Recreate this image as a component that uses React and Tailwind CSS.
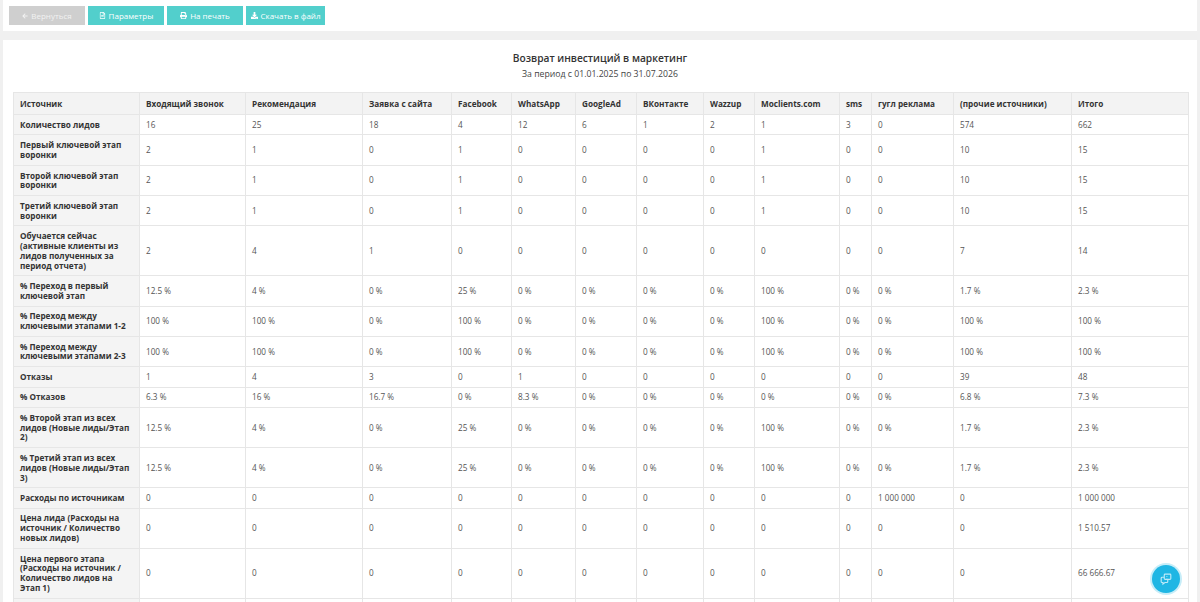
import React from 'react'
import { FaArrowLeft, FaRegFileAlt, FaPrint, FaDownload } from 'react-icons/fa'

const headers = [
  'Источник', 'Входящий звонок', 'Рекомендация', 'Заявка с сайта', 'Facebook', 'WhatsApp', 'GoogleAd',
  'ВКонтакте', 'Wazzup', 'Moclients.com', 'sms', 'гугл реклама', '(прочие источники)', 'Итого'
]

const widths = [
  'w-[126px]', 'w-[106px]', 'w-[117px]', 'w-[89px]', 'w-[60px]', 'w-[64px]', 'w-[61px]',
  'w-[67px]', 'w-[51px]', 'w-[85px]', 'w-[32px]', 'w-[82px]', 'w-[118px]', 'w-[117px]'
]

const stages = ['2', '1', '0', '1', '0', '0', '0', '0', '1', '0', '0', '10', '15']
const pctFirst = ['12.5 %', '4 %', '0 %', '25 %', '0 %', '0 %', '0 %', '0 %', '100 %', '0 %', '0 %', '1.7 %', '2.3 %']
const pctBetween = ['100 %', '100 %', '0 %', '100 %', '0 %', '0 %', '0 %', '0 %', '100 %', '0 %', '0 %', '100 %', '100 %']
const zeros = (last) => ['0', '0', '0', '0', '0', '0', '0', '0', '0', '0', '0', '0', last]

const rows = [
  ['Количество лидов', ['16', '25', '18', '4', '12', '6', '1', '2', '1', '3', '0', '574', '662']],
  ['Первый ключевой этап воронки', stages],
  ['Второй ключевой этап воронки', stages],
  ['Третий ключевой этап воронки', stages],
  ['Обучается сейчас (активные клиенты из лидов полученных за период отчета)', ['2', '4', '1', '0', '0', '0', '0', '0', '0', '0', '0', '7', '14']],
  ['% Переход в первый ключевой этап', pctFirst],
  ['% Переход между ключевыми этапами 1-2', pctBetween],
  ['% Переход между ключевыми этапами 2-3', pctBetween],
  ['Отказы', ['1', '4', '3', '0', '1', '0', '0', '0', '0', '0', '0', '39', '48']],
  ['% Отказов', ['6.3 %', '16 %', '16.7 %', '0 %', '8.3 %', '0 %', '0 %', '0 %', '0 %', '0 %', '0 %', '6.8 %', '7.3 %']],
  ['% Второй этап из всех лидов (Новые лиды/Этап 2)', pctFirst],
  ['% Третий этап из всех лидов (Новые лиды/Этап 3)', pctFirst],
  ['Расходы по источникам', ['0', '0', '0', '0', '0', '0', '0', '0', '0', '0', '1 000 000', '0', '1 000 000']],
  ['Цена лида (Расходы на источник / Количество новых лидов)', zeros('1 510.57')],
  ['Цена первого этапа (Расходы на источник / Количество лидов на Этап 1)', zeros('66 666.67')],
  ['Цена второго этапа (Расходы на источник / Количество лидов на Этап 2)', zeros('66 666.67')],
]

function Button({ icon, children, gray }) {
  return (
    <button
      className={`w-full h-[19px] flex items-center justify-center gap-[3px] text-[8px] ${gray ? 'bg-[#cfcfcf] text-[#f2f2f2]' : 'bg-[#52cfcc] text-white'}`}
    >
      {icon}
      <span>{children}</span>
    </button>
  )
}

export default function App() {
  return (
    <div className="min-h-screen bg-[#f0f0f0] px-[3px] font-['Open_Sans',sans-serif] text-[#333]">
      {/* Toolbar */}
      <div className="bg-white h-[31px] flex items-center gap-[3px] px-[6px]">
        <div className="w-[76px]"><Button gray icon={<FaArrowLeft size={6} />}>Вернуться</Button></div>
        <div className="w-[76px]"><Button icon={<FaRegFileAlt size={7} />}>Параметры</Button></div>
        <div className="w-[76px]"><Button icon={<FaPrint size={7} />}>На печать</Button></div>
        <div className="w-[79px]"><Button icon={<FaDownload size={7} />}>Скачать в файл</Button></div>
      </div>

      {/* Report */}
      <div className="mt-[9px] bg-white px-[10px] pt-[10px] pb-4">
        <div className="text-center">
          <div className="text-[10.2px] leading-[16px] font-semibold text-[#333]">Возврат инвестиций в маркетинг</div>
          <div className="text-[8.7px] leading-[14px] mt-[1px] text-[#444]">За период с 01.01.2025 по 31.07.2026</div>
        </div>

        <table className="mt-[11px] w-[1175px] table-fixed border-collapse text-[8.2px] leading-[9.85px]">
          <thead>
            <tr className="bg-[#f3f3f3]">
              {headers.map((h, i) => (
                <th key={i} className={`${widths[i]} px-[6px] py-[5.5px] leading-[10px] text-left font-bold text-[#333] border border-[#e6e6e6] whitespace-nowrap`}>
                  {h}
                </th>
              ))}
            </tr>
          </thead>
          <tbody>
            {rows.map(([label, vals], r) => (
              <tr key={r}>
                <td className="bg-[#f4f4f4] px-[6px] py-[4.8px] font-bold text-[#333] border border-[#e6e6e6] align-middle">
                  {label}
                </td>
                {vals.map((v, i) => (
                  <td key={i} className="px-[6px] py-[4.8px] text-[#555] border border-[#e6e6e6] align-middle whitespace-nowrap">
                    {v}
                  </td>
                ))}
              </tr>
            ))}
          </tbody>
        </table>
      </div>

      {/* Floating chat button */}
      <div className="fixed right-[20px] bottom-[9px] w-[28px] h-[28px] rounded-full bg-[#1fb6e4] shadow-[0_0_0_2px_rgba(31,182,228,0.25)] flex items-center justify-center">
        <svg width="14" height="14" viewBox="0 0 16 16" fill="none" stroke="#bfeaf8" strokeWidth="1.3">
          <rect x="6" y="2.5" width="7.5" height="6" rx="1" />
          <path d="M9 5.5v-1" />
          <path d="M9 6.8v0.2" />
          <path d="M6 6H3.5a1 1 0 0 0-1 1v4a1 1 0 0 0 1 1h1v1.8L6.8 12H9a1 1 0 0 0 1-1V8.5" />
        </svg>
      </div>
    </div>
  )
}
